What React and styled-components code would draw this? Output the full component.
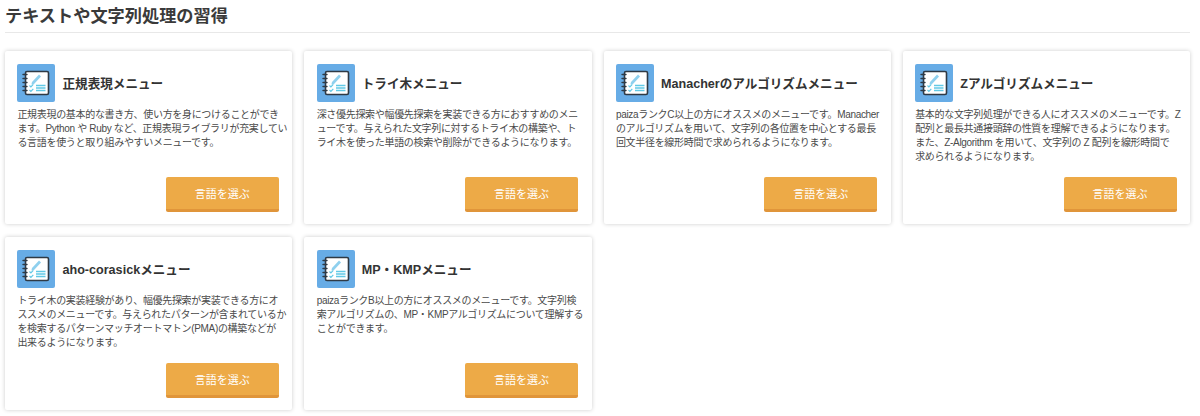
import React from 'react'
import styled, { createGlobalStyle } from 'styled-components'

const menus = [
  {
    title: '正規表現メニュー',
    lines: [
      '正規表現の基本的な書き方、使い方を身につけることができ',
      'ます。Python や Ruby など、正規表現ライブラリが充実してい',
      'る言語を使うと取り組みやすいメニューです。',
    ],
  },
  {
    title: 'トライ木メニュー',
    lines: [
      '深さ優先探索や幅優先探索を実装できる方におすすめのメニ',
      'ューです。与えられた文字列に対するトライ木の構築や、ト',
      'ライ木を使った単語の検索や削除ができるようになります。',
    ],
  },
  {
    title: 'Manacherのアルゴリズムメニュー',
    lines: [
      'paizaランクC以上の方にオススメのメニューです。Manacher',
      'のアルゴリズムを用いて、文字列の各位置を中心とする最長',
      '回文半径を線形時間で求められるようになります。',
    ],
  },
  {
    title: 'Zアルゴリズムメニュー',
    lines: [
      '基本的な文字列処理ができる人にオススメのメニューです。Z',
      '配列と最長共通接頭辞の性質を理解できるようになります。',
      'また、Z-Algorithm を用いて、文字列の Z 配列を線形時間で',
      '求められるようになります。',
    ],
  },
  {
    title: 'aho-corasickメニュー',
    lines: [
      'トライ木の実装経験があり、幅優先探索が実装できる方にオ',
      'ススメのメニューです。与えられたパターンが含まれているか',
      'を検索するパターンマッチオートマトン(PMA)の構築などが',
      '出来るようになります。',
    ],
  },
  {
    title: 'MP・KMPメニュー',
    lines: [
      'paizaランクB以上の方にオススメのメニューです。文字列検',
      '索アルゴリズムの、MP・KMPアルゴリズムについて理解する',
      'ことができます。',
    ],
  },
]

const NotebookIcon = () => (
  <svg width="38" height="38" viewBox="0 0 38 38">
    <rect x="8.5" y="7.5" width="23" height="23" rx="1.5" fill="#fff" stroke="#2f3a45" strokeWidth="1.6" />
    <path d="M6 10.5h4M6 14.5h4M6 18.5h4M6 22.5h4M6 26.5h4" stroke="#2f3a45" strokeWidth="1.4" strokeLinecap="round" />
    <path d="M15 18l7-7.5 2 2-7 7.5-2.6.6z" fill="#8fd0ee" />
    <path d="M12.5 21.5l1.4 1.4 2.4-2.6M12.5 26l1.4 1.4 2.4-2.6" fill="none" stroke="#62c9e6" strokeWidth="1.2" />
    <path d="M19 21.5h9.5M19 24h9.5M19 26.5h9.5" stroke="#62c9e6" strokeWidth="1.4" />
  </svg>
)

const App = () => {
  return (
    <Page>
      <GlobalStyle />
      <Heading>テキストや文字列処理の習得</Heading>
      <CardGrid>
        {menus.map((menu) => (
          <Card key={menu.title}>
            <CardHead>
              <IconBox>
                <NotebookIcon />
              </IconBox>
              <CardTitle>{menu.title}</CardTitle>
            </CardHead>
            <CardText>
              {menu.lines.map((line) => (
                <TextLine key={line}>{line}</TextLine>
              ))}
            </CardText>
            <CardFoot>
              <SelectButton>言語を選ぶ</SelectButton>
            </CardFoot>
          </Card>
        ))}
      </CardGrid>
    </Page>
  )
}

export default App

const GlobalStyle = createGlobalStyle`
  html, body {
    margin: 0;
    padding: 0;
    background: #fff;
  }
  body {
    font-family: "Liberation Sans", "Noto Sans CJK JP", sans-serif;
    color: #333;
  }
`

const Page = styled.div`
  width: 1200px;
  height: 416px;
  overflow: hidden;
  box-sizing: border-box;
  padding: 5px 10px 0 5px;
`

const Heading = styled.h2`
  margin: 0 0 18px;
  padding-bottom: 5px;
  height: 22px;
  line-height: 22px;
  font-size: 17.2px;
  font-weight: 700;
  color: #3a3a3a;
  border-bottom: 1px solid #e8e8e8;
`

const CardGrid = styled.div`
  display: grid;
  grid-template-columns: repeat(4, minmax(0, 1fr));
  column-gap: 12px;
  row-gap: 13px;
`

const Card = styled.div`
  box-sizing: border-box;
  height: 173px;
  padding: 13px 13.4px 12px 12.45px;
  display: flex;
  flex-direction: column;
  background: #fff;
  border-radius: 2px;
  box-shadow: 0 0 4px rgba(0, 0, 0, 0.2);
`

const CardHead = styled.div`
  display: flex;
  align-items: center;
  gap: 7px;
`

const IconBox = styled.div`
  width: 38px;
  height: 38px;
  flex: none;
  background: #67ace6;
  border-radius: 2px;
`

const CardTitle = styled.div`
  padding-bottom: 2px;
  font-size: 12.6px;
  font-weight: 700;
  color: #333;
`

const CardText = styled.p`
  margin: 6px 0 0;
  font-size: 10px;
  letter-spacing: -0.32px;
  line-height: 14px;
  color: #4a4a4a;
`

const TextLine = styled.span`
  display: block;
  white-space: nowrap;
`

const CardFoot = styled.div`
  margin-top: auto;
  display: flex;
  justify-content: flex-end;
`

const SelectButton = styled.button`
  box-sizing: border-box;
  width: 113px;
  height: 35px;
  border: none;
  border-bottom: 3px solid #e0953a;
  border-radius: 2px;
  background: #edaa47;
  color: #fff;
  font-family: inherit;
  font-size: 11px;
  font-weight: 400;
  padding: 0;
`
